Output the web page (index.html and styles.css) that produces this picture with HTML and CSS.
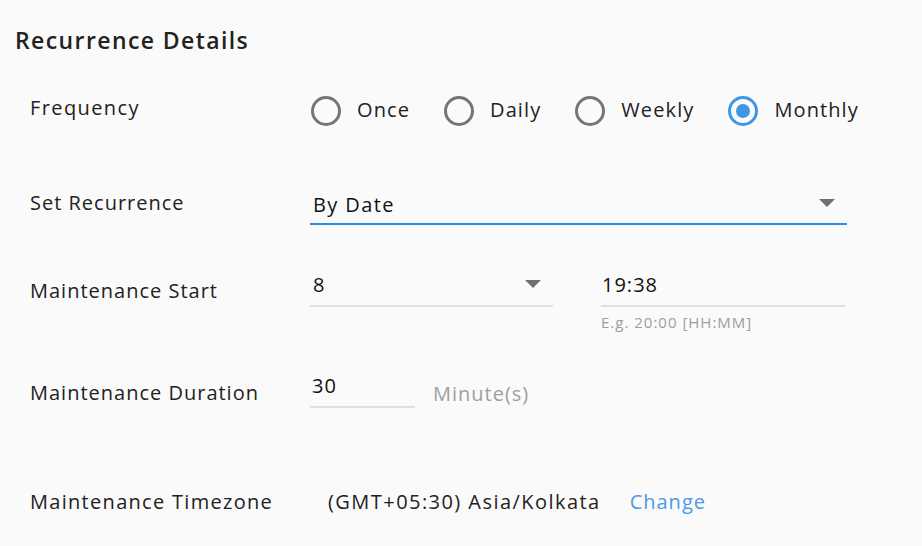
FILE: index.html
```html
<!DOCTYPE html>
<html lang="en">
<head>
<meta charset="utf-8">
<title>Recurrence Details</title>
<link rel="stylesheet" href="styles.css">
</head>
<body>
<main class="panel">
  <h2 class="title">Recurrence Details</h2>

  <div class="row row-freq">
    <div class="label">Frequency</div>
    <div class="radios">
      <label class="radio"><span class="dot"></span><span class="rtext">Once</span></label>
      <label class="radio"><span class="dot"></span><span class="rtext">Daily</span></label>
      <label class="radio"><span class="dot"></span><span class="rtext">Weekly</span></label>
      <label class="radio checked"><span class="dot"></span><span class="rtext">Monthly</span></label>
    </div>
  </div>

  <div class="row row-rec">
    <div class="label">Set Recurrence</div>
    <div class="field select select-wide focused">
      <span class="value">By Date</span>
      <span class="caret"></span>
    </div>
  </div>

  <div class="row row-start">
    <div class="label">Maintenance Start</div>
    <div class="start-fields">
      <div class="field select select-day">
        <span class="value">8</span>
        <span class="caret"></span>
      </div>
      <div class="time-wrap">
        <div class="field input-time"><span class="value">19:38</span></div>
        <div class="hint">E.g. 20:00 [HH:MM]</div>
      </div>
    </div>
  </div>

  <div class="row row-dur">
    <div class="label">Maintenance Duration</div>
    <div class="dur-fields">
      <div class="field input-dur"><span class="value">30</span></div>
      <span class="unit">Minute(s)</span>
    </div>
  </div>

  <div class="row row-tz">
    <div class="label">Maintenance Timezone</div>
    <div class="tz">
      <span class="tz-value">(GMT+05:30) Asia/Kolkata</span>
      <a class="change" href="#">Change</a>
    </div>
  </div>
</main>
</body>
</html>
```

FILE: styles.css
```css
html, body {
  margin: 0;
  padding: 0;
  background: #fafafa;
}

body {
  font-family: "Open Sans", Lato, "Liberation Sans", sans-serif;
  color: #222;
  font-size: 20px;
  letter-spacing: 1px;
}

.panel {
  padding: 0 0 0 15px;
  width: 907px;
  height: 546px;
  box-sizing: border-box;
}

.title {
  margin: 0;
  padding-top: 25px;
  font-size: 23px;
  line-height: 30px;
  font-weight: 600;
  letter-spacing: 1.4px;
  color: #222;
}

.row {
  display: grid;
  grid-template-columns: 280px auto;
  align-items: start;
  padding-left: 15px;
}

.label {
  font-size: 20px;
  line-height: 24px;
  color: #222;
  white-space: nowrap;
}

/* Frequency */
.row-freq {
  margin-top: 41px;
  height: 30px;
}
.row-freq .label { margin-top: 0; letter-spacing: 1.4px; }

.radios {
  display: flex;
  align-items: center;
  gap: 34px;
  height: 30px;
  margin-left: 1px;
  margin-top: 0;
}

.radio {
  display: flex;
  align-items: center;
  gap: 16px;
  cursor: pointer;
}

.dot {
  width: 30px;
  height: 30px;
  box-sizing: border-box;
  border: 3px solid #757575;
  border-radius: 50%;
  display: flex;
  align-items: center;
  justify-content: center;
}

.radio.checked .dot {
  border-color: #3f97e4;
}
.radio.checked .dot::after {
  content: "";
  width: 14px;
  height: 14px;
  border-radius: 50%;
  background: #3f97e4;
}

.rtext {
  font-size: 20px;
  line-height: 24px;
  margin-top: -3px;
  letter-spacing: 1.1px;
}

/* Fields */
.field {
  position: relative;
  box-sizing: border-box;
  height: 40px;
  border-bottom: 2px solid #e0e0e0;
  display: flex;
  align-items: center;
}

.field .value {
  font-size: 20px;
  line-height: 24px;
  color: #111;
}

.select .value { padding-left: 3px; }

.caret {
  position: absolute;
  right: 12px;
  top: 14px;
  width: 0;
  height: 0;
  border-left: 8px solid transparent;
  border-right: 8px solid transparent;
  border-top: 8px solid #707070;
}

.focused {
  border-bottom-color: #2b8de3;
}

/* Set Recurrence */
.row-rec {
  margin-top: 59px;
}
.row-rec .label { padding-top: 6px; }
.select-wide {
  width: 537px;
}
.select-wide .value { margin-top: 1px; letter-spacing: 1.4px; }
.select-wide .caret { top: 14px; }

/* Maintenance Start */
.row-start {
  margin-top: 42px;
}
.row-start .label { padding-top: 12px; }

.start-fields {
  display: flex;
  gap: 48px;
}
.select-day {
  width: 243px;
  padding-bottom: 4px;
}
.select-day .value { margin-top: 1px; }
.select-day .caret { top: 13px; }
.input-time {
  width: 244px;
  padding-bottom: 4px;
}
.input-time .value { padding-left: 1px; margin-top: 1px; }

.hint {
  margin-top: 6px;
  font-size: 15px;
  line-height: 18px;
  letter-spacing: 1px;
  color: #9e9e9e;
  padding-left: 0;
}

/* Duration */
.row-dur {
  margin-top: 37px;
}
.row-dur .label { padding-top: 13px; }
.dur-fields {
  display: flex;
  align-items: flex-start;
  gap: 18px;
}
.input-dur {
  width: 105px;
  padding-bottom: 4px;
}
.input-dur .value { padding-left: 2px; margin-top: 2px; }
.unit {
  color: #9e9e9e;
  font-size: 20px;
  line-height: 24px;
  padding-top: 14px;
}

/* Timezone */
.row-tz {
  margin-top: 82px;
}
.row-tz .label { letter-spacing: 1.3px; }
.tz {
  display: flex;
  gap: 29px;
  padding-left: 18px;
  line-height: 24px;
}
.tz-value { color: #222; letter-spacing: 1.45px; }
.change {
  color: #4a9be6;
  text-decoration: none;
}
```
